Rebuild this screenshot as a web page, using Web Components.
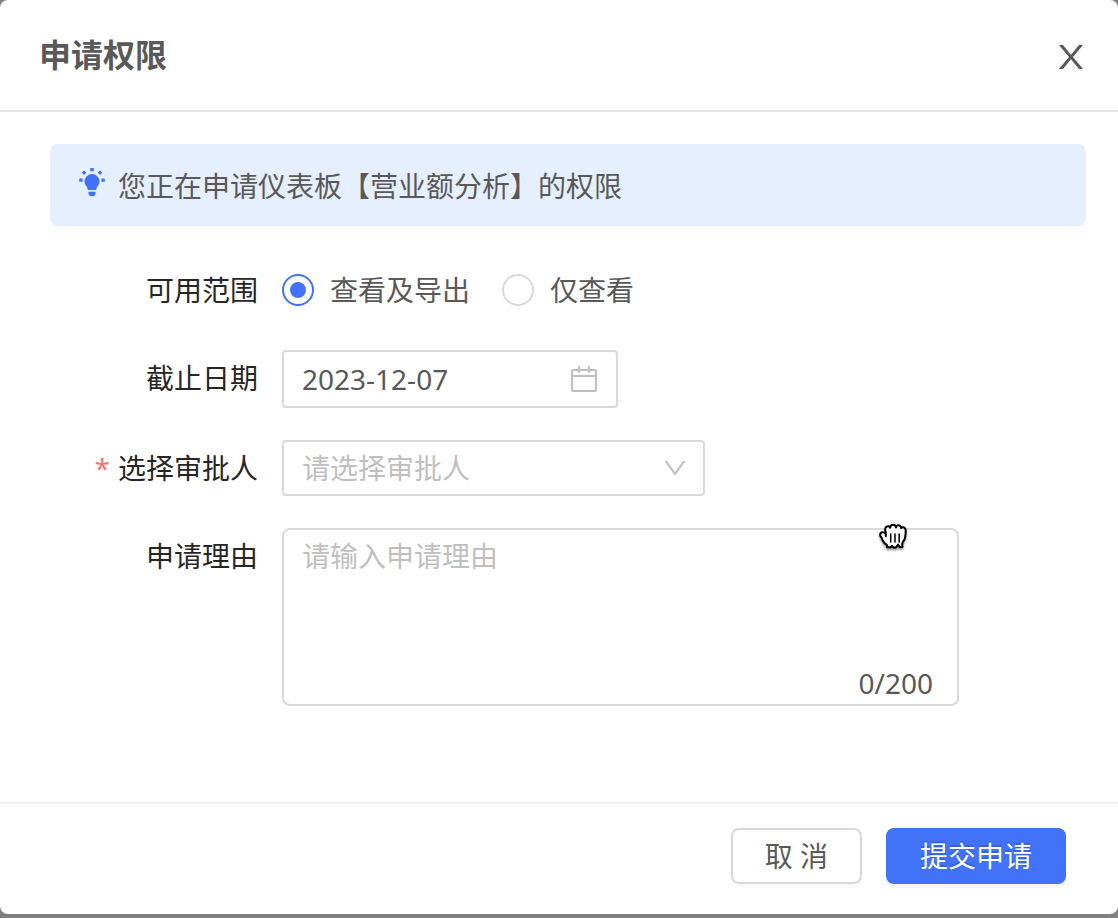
<!DOCTYPE html>
<html lang="zh-CN">
<head>
<meta charset="utf-8">
<meta name="viewport" content="width=device-width, initial-scale=1">
<title>申请权限</title>
<style>
html {
  background: #808080;
}
body {
  margin: 0;
  color: #595959;
  font: 28px/40px "Noto Sans", "Noto Sans CJK SC", sans-serif;
}
</style>
</head>
<body>
<permission-request></permission-request>

<script>
const define = (name, html, setup) => {
  const template = document.createElement("template");
  template.innerHTML = html;

  customElements.define(name, class extends HTMLElement {
    constructor() {
      super();
      this.attachShadow({ mode: "open" });
      this.shadowRoot.appendChild(template.content.cloneNode(true));
      if (setup) setup(this, this.shadowRoot);
    }
  });
};

define("modal-dialog", `
<style>
:host {
  display: block;
  background: #fff;
  border-radius: 8px;
}
header {
  display: flex;
  align-items: center;
  justify-content: space-between;
  height: 110px;
  padding: 0 28px 0 39px;
  border-bottom: 2px solid #e3e3e3;
}
h1 {
  margin: 0;
  font-size: 32px;
  font-weight: 600;
}
.close {
  display: flex;
  margin: 4px 0 0;
  padding: 0;
  border: 0;
  background: none;
  color: inherit;
  cursor: pointer;
}
.body {
  padding: 32px 32px 96px 50px;
}
footer {
  display: flex;
  justify-content: flex-end;
  gap: 24px;
  padding: 24px 52px 30px;
  border-top: 2px solid #f0f0f0;
}
</style>

<header>
  <h1><slot name="title"></slot></h1>
  <button class="close" type="button" aria-label="关闭">
    <svg width="38" height="38" viewBox="0 0 1024 1024" fill="currentColor"><path d="M563.8 512l262.5-312.9c4.4-5.2.7-13.1-6.1-13.1h-79.8c-4.7 0-9.2 2.1-12.3 5.7L511.6 449.8 295.1 191.7c-3-3.6-7.5-5.7-12.3-5.7H203c-6.8 0-10.5 7.9-6.1 13.1L459.4 512 196.9 824.9A7.95 7.95 0 0 0 203 838h79.8c4.7 0 9.2-2.1 12.3-5.7l216.5-258.1 216.5 258.1c3 3.6 7.5 5.7 12.3 5.7h79.8c6.8 0 10.5-7.9 6.1-13.1L563.8 512z"/></svg>
  </button>
</header>
<div class="body"><slot></slot></div>
<footer><slot name="footer"></slot></footer>
`);

define("notice-bar", `
<style>
:host {
  display: flex;
  align-items: center;
  gap: 12px;
  padding: 22px 28px 20px;
  border-radius: 8px;
  background: #e6effd;
}
svg {
  flex: none;
  color: #4172f7;
}
</style>

<svg width="28" height="36" viewBox="0 0 28 36" fill="currentColor">
  <path d="M14 6a7.5 7.500 0 0 1 7.500 7.500c0 2.300-1.100 4-2.500 5.300L18.200 22H9.800L9 18.800c-1.400-1.300-2.500-3-2.500-5.300A7.500 7.500 0 0 1 14 6z"/>
  <path d="M10.500 23.700h7v1.500a3 3 0 0 1-3 3h-1a3 3 0 0 1-3-3z"/>
  <path d="M12.200 0h3.600v3.200h-3.600zM1.200 10.400h3.400v3.400H1.200zM23.400 10.400h3.400v3.400h-3.400z"/>
  <path d="M6 2.500l2.300 2.200L6 7 3.800 4.700zM22 2.500l2.200 2.200L22 7l-2.300-2.300z"/>
</svg>
<slot></slot>
`);

define("form-row", `
<style>
:host {
  display: grid;
  grid-template-columns: 208px minmax(0, 1fr);
  column-gap: 24px;
}
.label {
  display: flex;
  justify-content: flex-end;
  gap: 8px;
  line-height: 56px;
  color: #262626;
}
.mark {
  display: none;
  color: #f5786d;
}
:host([required]) .mark {
  display: block;
}
</style>

<div class="label"><span class="mark">*</span><slot name="label"></slot></div>
<slot></slot>
`);

define("scope-radios", `
<style>
:host {
  display: flex;
  align-items: center;
  gap: 32px;
  min-height: 56px;
}
label {
  display: flex;
  align-items: center;
  gap: 16px;
}
input {
  appearance: none;
  display: grid;
  place-items: center;
  width: 32px;
  height: 32px;
  margin: 0;
  border: 2px solid #d9d9d9;
  border-radius: 50%;
}
input:checked {
  border-color: #4172f7;
}
input:checked::before {
  content: "";
  width: 16px;
  height: 16px;
  border-radius: 50%;
  background: #4172f7;
}
</style>

<label><input type="radio" name="scope" value="export" checked>查看及导出</label>
<label><input type="radio" name="scope" value="view">仅查看</label>
`);

// box around a slotted native control, with an icon on the right
define("field-box", `
<style>
:host {
  display: grid;
  align-items: center;
  box-sizing: border-box;
  width: 100%;
  border: 2px solid #d9d9d9;
  border-radius: 4px;
}
::slotted(input),
::slotted(select) {
  grid-area: 1 / 1;
  appearance: none;
  box-sizing: border-box;
  width: 100%;
  height: var(--control-height, 52px);
  margin: 0;
  padding: 0 56px 0 18px;
  border: 0;
  outline: 0;
  background: none;
  color: inherit;
  font: inherit;
}
::slotted(svg) {
  grid-area: 1 / 1;
  justify-self: end;
  margin-right: var(--icon-inset, 18px);
  color: #bfbfbf;
  pointer-events: none;
}
</style>

<slot></slot>
`);

define("count-box", `
<style>
:host {
  display: block;
  position: relative;
  box-sizing: border-box;
  width: 100%;
  max-width: 677px;
}
::slotted(textarea) {
  display: block;
  box-sizing: border-box;
  width: 100%;
  height: 178px;
  margin: 0;
  padding: 6px 18px;
  border: 2px solid #d9d9d9;
  border-radius: 8px;
  outline: 0;
  resize: none;
  background: #fff;
  color: inherit;
  font: inherit;
}
.count {
  position: absolute;
  right: 26px;
  bottom: 3px;
}
</style>

<slot></slot>
<span class="count">0/200</span>
`, (host, root) => {
  host.addEventListener("input", (event) => {
    root.querySelector(".count").textContent = `${event.target.value.length}/200`;
  });
});

define("action-button", `
<style>
:host {
  display: block;
}
button {
  display: block;
  height: 56px;
  padding: 0 32px;
  border: 2px solid #d9d9d9;
  border-radius: 8px;
  background: #fff;
  box-shadow: 0 4px 0 rgba(0, 0, 0, 0.02);
  color: inherit;
  font: inherit;
  cursor: pointer;
}
:host([primary]) button {
  border-color: #4172f7;
  background: #4172f7;
  box-shadow: 0 4px 0 rgba(0, 0, 0, 0.04);
  color: #fff;
  text-shadow: 0 -2px 0 rgba(0, 0, 0, 0.12);
}
</style>

<button type="button"><slot></slot></button>
`);

define("grab-cursor", `
<style>
:host {
  position: absolute;
  top: -6px;
  right: 49px;
  width: 32px;
  height: 32px;
  pointer-events: none;
}
svg {
  display: block;
  filter: drop-shadow(0 2px 1px rgba(0, 0, 0, 0.4));
}
</style>

<svg width="32" height="32" viewBox="0 0 32 32" fill="#fff" stroke="#000" stroke-width="2" stroke-linecap="round" stroke-linejoin="round">
  <path d="M7.8 10.6C7 8.300 6.900 6 8.200 4.900c1.500-1.200 3.300-.6 4 .8.1-1.800 1.200-3 2.900-3 1.600 0 2.700 1 2.900 2.700.4-1.500 1.400-2.300 2.800-2.100 1.500.2 2.300 1.300 2.300 2.900.8-1 1.900-1.300 3-.7 1.500.8 1.800 2.300 1.600 4.300-.2 3-.2 4.800-1 7-.7 1.800-1.900 2.900-2.300 4.300-.3 1.200-.2 2.500.1 3.900h-2.900l-1.500-2.400-2 2.800h-2.600L14 24l-1.400 1.300H9v-2.100c-1.200-1-3-2.500-4-4.300-.8-1.500-1-2.800-2-4-.9-1.200-1.200-2.800-.2-3.900 1.300-1.400 3.500-.7 5 1.200v2"/>
  <path d="M12.700 12v8M17 12v8M21.200 12v8" fill="none" stroke-width="1.500"/>
</svg>
`);

define("permission-request", `
<style>
:host {
  display: block;
}
form {
  display: grid;
  gap: 32px;
  padding-top: 36px;
}
.date {
  --control-height: 54px;
  max-width: 336px;
}
.approver {
  --icon-inset: 14px;
  max-width: 423px;
}
select:invalid {
  color: #bfbfbf;
}
::placeholder {
  color: #bfbfbf;
  opacity: 1;
}
</style>

<modal-dialog>
  <span slot="title">申请权限</span>

  <notice-bar>您正在申请仪表板【营业额分析】的权限</notice-bar>

  <form>
    <form-row>
      <span slot="label">可用范围</span>
      <scope-radios role="radiogroup" aria-label="可用范围"></scope-radios>
    </form-row>
    <form-row>
      <label slot="label" for="deadline">截止日期</label>
      <field-box class="date">
        <input id="deadline" type="text" value="2023-12-07">
        <svg width="28" height="28" viewBox="0 0 28 28" fill="none" stroke="currentColor" stroke-width="2">
          <rect x="2" y="5" width="24" height="21" rx="1"/>
          <path d="M2 11h24M9 1v7M19 1v7"/>
        </svg>
      </field-box>
    </form-row>
    <form-row required>
      <label slot="label" for="approver">选择审批人</label>
      <field-box class="approver">
        <select id="approver" required>
          <option value="" selected disabled hidden>请选择审批人</option>
        </select>
        <svg width="28" height="28" viewBox="0 0 1024 1024" fill="currentColor"><path d="M884 256h-75c-5.100 0-9.900 2.500-12.900 6.600L512 654.200 227.900 262.600c-3-4.100-7.800-6.600-12.900-6.600h-75c-6.500 0-10.300 7.400-6.500 12.700l352.600 486.100c12.800 17.600 39 17.600 51.700 0l352.600-486.100c3.900-5.300.1-12.700-6.400-12.700z"/></svg>
      </field-box>
    </form-row>
    <form-row>
      <label slot="label" for="reason">申请理由</label>
      <count-box>
        <textarea id="reason" maxlength="200" placeholder="请输入申请理由"></textarea>
        <grab-cursor></grab-cursor>
      </count-box>
    </form-row>
  </form>

  <action-button slot="footer">取 消</action-button>
  <action-button slot="footer" primary>提交申请</action-button>
</modal-dialog>
`);
</script>
</body>
</html>
